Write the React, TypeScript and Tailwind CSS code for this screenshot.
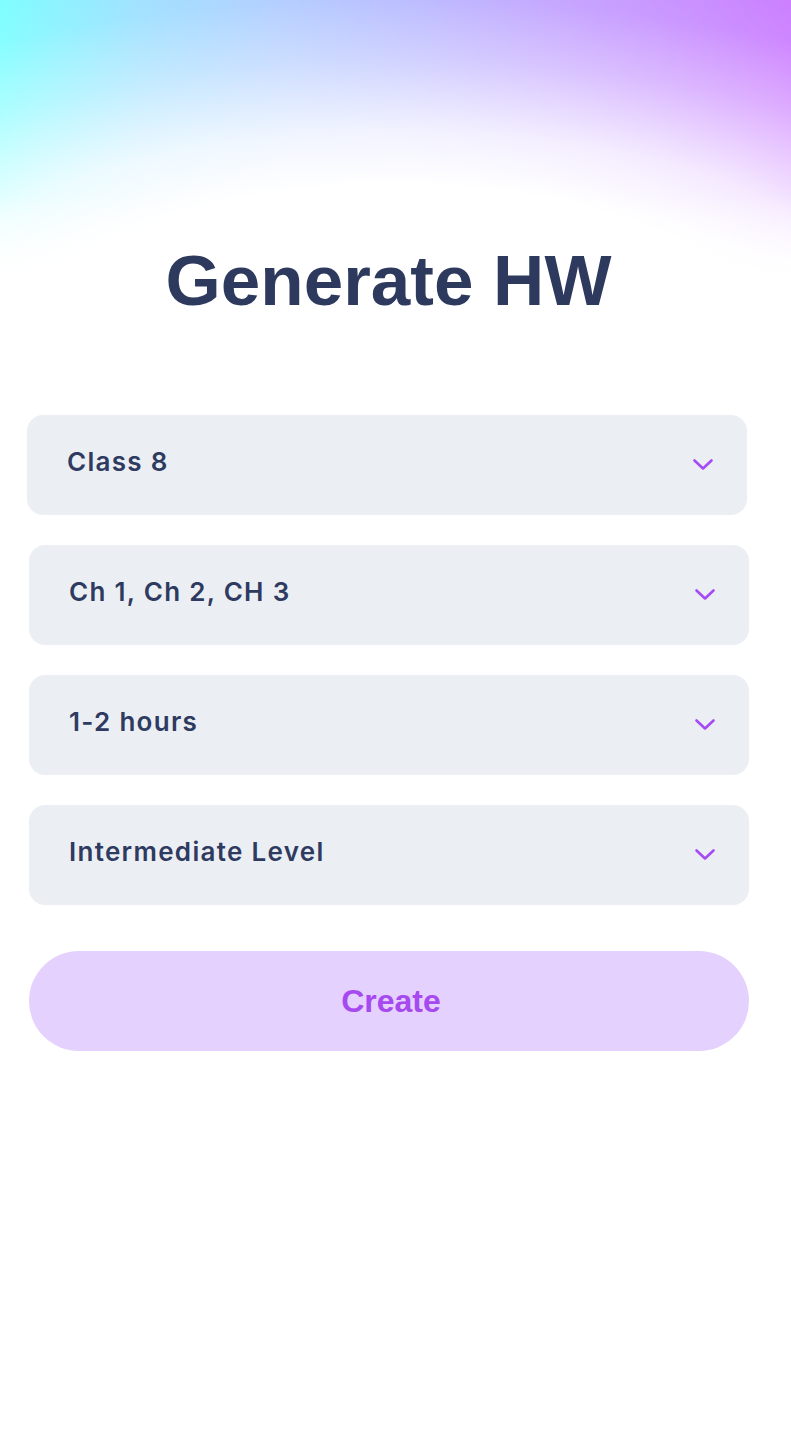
import React from 'react';

const Chevron = () => (
  <svg width="22" height="14" viewBox="0 0 22 14" fill="none" className="shrink-0">
    <path d="M2.5 2.5 L11 10.5 L19.5 2.5" stroke="#a54af4" strokeWidth="2.6" strokeLinecap="round" strokeLinejoin="round" />
  </svg>
);

const App = () => {
  const fields = [
    { label: 'Class 8', shift: true },
    { label: 'Ch 1, Ch 2, CH 3', shift: false },
    { label: '1-2 hours', shift: false },
    { label: 'Intermediate Level', shift: false }
  ];

  return (
    <div className="min-h-screen w-full bg-white bg-no-repeat bg-top bg-[length:100%_300px] bg-[linear-gradient(180deg,rgba(255,255,255,0)_0px,rgba(255,255,255,0)_195px,#ffffff_275px),radial-gradient(ellipse_820px_330px_at_50%_330px,#ffffff_44%,rgba(255,255,255,0.82)_60%,rgba(255,255,255,0.35)_82%,rgba(255,255,255,0.05)_100%,rgba(255,255,255,0)_110%),linear-gradient(90deg,#7ffeff_0%,#a0e0ff_18%,#b0cdff_35%,#b9b8ff_53%,#c3a4ff_70%,#cc80ff_100%)]">
      <div className="pt-[245px] pr-[14px] flex justify-center">
        <h1 className="text-[71px] leading-[71px] font-bold text-[#2d3a5e] font-['Liberation_Sans',Arial,sans-serif]">
          Generate HW
        </h1>
      </div>

      <div className="mt-[99px] px-[29px] flex flex-col gap-[30px]">
        {fields.map((field, index) => (
          <div
            key={index}
            className={`h-[100px] w-[720px] rounded-[16px] bg-[#ebeff4] flex items-center justify-between pl-[40px] pr-[33px] ${field.shift ? '-ml-[2px]' : ''}`}
          >
            <span className="pb-[8px] text-[26px] tracking-[1.3px] font-semibold text-[#2e3a5f] font-['Inter',sans-serif]">
              {field.label}
            </span>
            <Chevron />
          </div>
        ))}
      </div>

      <div className="mt-[46px] px-[29px]">
        <button className="h-[100px] w-[720px] rounded-full bg-[#e5d1fe] flex items-center justify-center pl-[4px] text-[32px] font-bold text-[#a64af0] font-['Liberation_Sans',Arial,sans-serif]">
          Create
        </button>
      </div>
    </div>
  );
};

export default App;
